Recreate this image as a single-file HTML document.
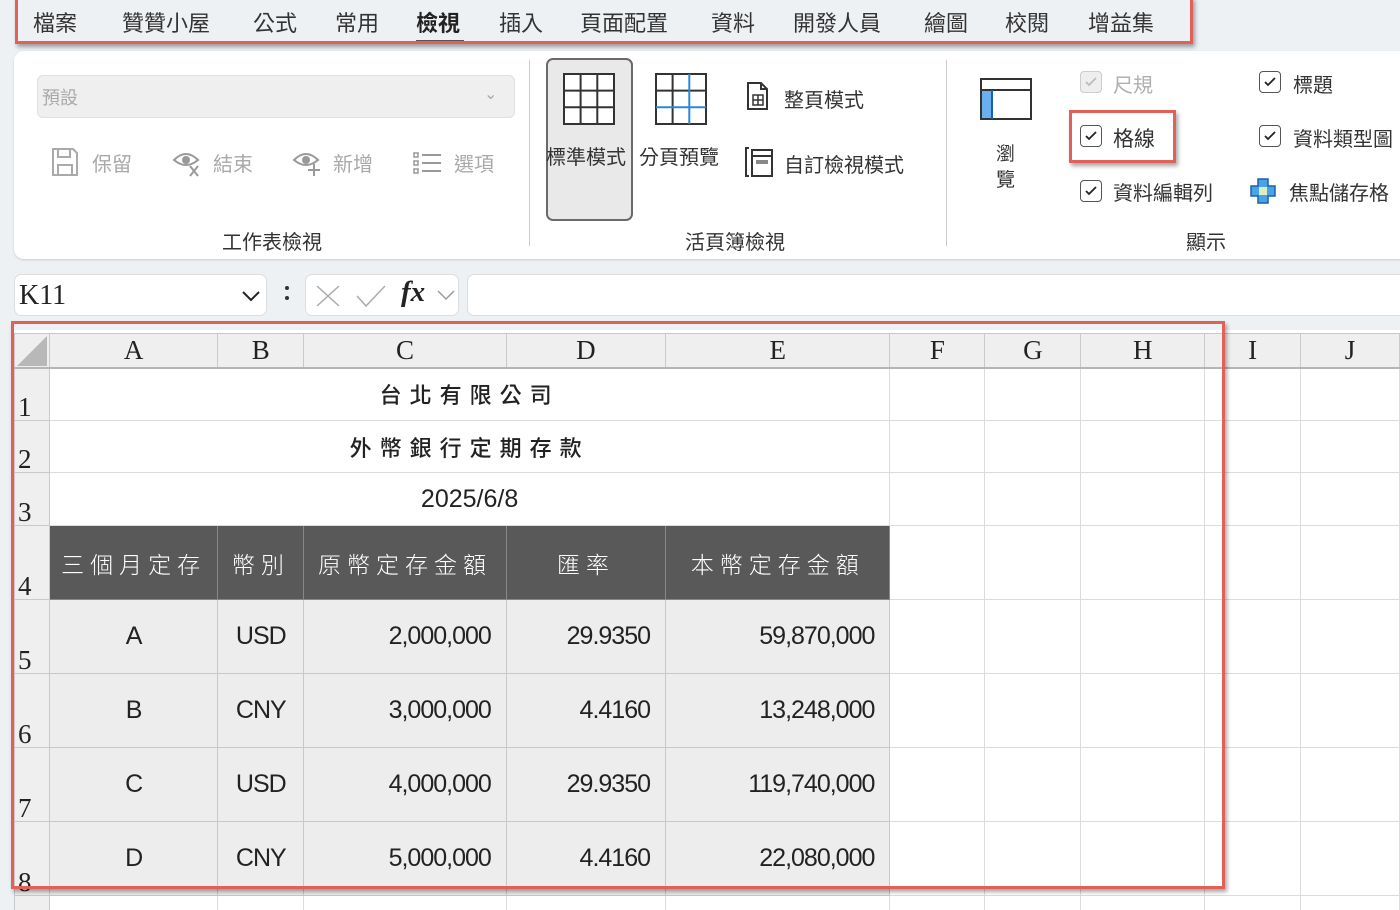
<!DOCTYPE html>
<html style="width:1400px;height:910px;overflow:hidden"><head><meta charset="utf-8">
<style>
*{margin:0;padding:0;box-sizing:border-box}
body{width:1400px;height:910px;overflow:hidden;background:#eef1f4;font-family:"Liberation Sans","Noto Sans CJK TC",sans-serif;position:relative;color:#222}
.a{position:absolute;white-space:nowrap}
.tab{position:absolute;top:6px;font-size:22px;color:#333}
.red{position:absolute;border:3px solid #e2605a;box-shadow:2px 3px 4px rgba(0,0,0,.35)}
.g{color:#a9a9a9}
.cb{position:absolute;width:22px;height:22px;border:1.5px solid #555;border-radius:4px;background:#fff}
.cb svg{position:absolute;left:3px;top:3px}
table{position:absolute;left:14px;top:333px;border-collapse:collapse;table-layout:fixed}
td{border:1px solid #dcdcdc;padding:0;overflow:hidden;white-space:nowrap}
tr.h td{background:#efefef;font-family:"Liberation Serif",serif;font-size:27px;text-align:center;color:#222;border-color:#c9c9c9;border-bottom:2px solid #b5b5b5}
td.rh{background:#efefef;font-family:"Liberation Serif",serif;font-size:27px;vertical-align:bottom;padding-left:3px;line-height:26px;border-color:#c9c9c9}
td.hd{background:#595959;color:#fff;font-size:23px;letter-spacing:6px;text-align:center;font-family:"Noto Sans CJK TC",sans-serif;font-weight:300;border-color:#888}
td.d{background:#ededed;font-family:"Liberation Sans Narrow","Liberation Sans",sans-serif;font-size:25px;letter-spacing:-1px;border-color:#c8c8c8;color:#222}
td.c{text-align:center}
td.r{text-align:right;padding-right:15px}
td.t{text-align:center;font-family:"Noto Sans CJK TC",sans-serif;font-size:22px;letter-spacing:8px;font-weight:500}
</style></head><body>

<div class="tab" style="left:33px">檔案</div>
<div class="tab" style="left:122px">贊贊小屋</div>
<div class="tab" style="left:253px">公式</div>
<div class="tab" style="left:335px">常用</div>
<div class="tab" style="left:416px;font-weight:bold;color:#222">檢視</div>
<div class="a" style="left:416px;top:40px;width:48px;height:3px;background:#555"></div>
<div class="tab" style="left:499px">插入</div>
<div class="tab" style="left:580px">頁面配置</div>
<div class="tab" style="left:711px">資料</div>
<div class="tab" style="left:793px">開發人員</div>
<div class="tab" style="left:924px">繪圖</div>
<div class="tab" style="left:1005px">校閱</div>
<div class="tab" style="left:1088px">增益集</div>
<div class="red" style="left:15px;top:-3px;width:1178px;height:47px"></div>

<div class="a" style="left:14px;top:51px;width:1400px;height:208px;background:#fff;border-radius:10px;box-shadow:0 1px 2px rgba(0,0,0,.15)"></div>
<div class="a" style="left:37px;top:75px;width:478px;height:43px;background:#efefef;border:1px solid #e0e0e0;border-radius:6px"></div>
<div class="a g" style="left:42px;top:84px;font-size:18px">預設</div>
<div class="a g" style="left:484px;top:84px;font-size:16px">⌄</div>
<svg class="a" style="left:51px;top:147px" width="28" height="30" viewBox="0 0 28 30"><path d="M2 2h20l4 4v22H2z M7 2v8h12V2 M7 28V18h14v10" fill="none" stroke="#aaa" stroke-width="2"/></svg>
<div class="a g" style="left:92px;top:148px;font-size:20px">保留</div>
<svg class="a" style="left:172px;top:150px" width="30" height="28" viewBox="0 0 30 28"><path d="M2 10q12-12 24 0q-12 10-24 0z" fill="none" stroke="#999" stroke-width="2"/><circle cx="14" cy="10" r="4" fill="#999"/><path d="M18 16l8 10M26 16l-8 10" stroke="#999" stroke-width="2"/></svg>
<div class="a g" style="left:213px;top:148px;font-size:20px">結束</div>
<svg class="a" style="left:292px;top:150px" width="30" height="28" viewBox="0 0 30 28"><path d="M2 10q12-12 24 0q-12 10-24 0z" fill="none" stroke="#999" stroke-width="2"/><circle cx="14" cy="10" r="4" fill="#999"/><path d="M22 14v12M16 20h12" stroke="#999" stroke-width="2"/></svg>
<div class="a g" style="left:333px;top:148px;font-size:20px">新增</div>
<svg class="a" style="left:413px;top:151px" width="30" height="24" viewBox="0 0 30 24"><path d="M1 2h4v4H1zM1 10h4v4H1zM1 18h4v4H1z" fill="none" stroke="#999" stroke-width="1.5"/><path d="M9 4h19M9 12h19M9 20h19" stroke="#999" stroke-width="2"/></svg>
<div class="a g" style="left:454px;top:148px;font-size:20px">選項</div>
<div class="a" style="left:222px;top:226px;font-size:20px;color:#333">工作表檢視</div>
<div class="a" style="left:529px;top:60px;width:1px;height:186px;background:#ccc"></div>

<div class="a" style="left:546px;top:58px;width:87px;height:163px;background:#e9e9e9;border:2px solid #6a6a6a;border-radius:7px"></div>
<svg class="a" style="left:563px;top:73px" width="52" height="52" viewBox="0 0 52 52"><path d="M1 1h50v50H1zM1 17.6h50M1 34.3h50M17.6 1v50M34.3 1v50" fill="#fff" stroke="#333" stroke-width="2"/></svg>
<div class="a" style="left:546px;top:141px;font-size:20px;color:#333">標準模式</div>
<svg class="a" style="left:655px;top:73px" width="52" height="52" viewBox="0 0 52 52"><path d="M1 1h50v50H1zM1 17.6h50M17.6 1v50" fill="#fff" stroke="#333" stroke-width="2"/><path d="M1 34.3h50M34.3 1v50" stroke="#2b88d8" stroke-width="2"/></svg>
<div class="a" style="left:639px;top:141px;font-size:20px;color:#333">分頁預覽</div>
<svg class="a" style="left:747px;top:82px" width="22" height="28" viewBox="0 0 22 28"><path d="M1 1h13l6 6v20H1z M14 1v6h6" fill="none" stroke="#333" stroke-width="2"/><path d="M6 13h10v10H6zM11 13v10M6 18h10" fill="none" stroke="#333" stroke-width="1.5"/></svg>
<div class="a" style="left:784px;top:84px;font-size:20px;color:#333">整頁模式</div>
<svg class="a" style="left:744px;top:146px" width="30" height="32" viewBox="0 0 30 32"><path d="M2 2v28M1 2h4M1 30h4" stroke="#333" stroke-width="2"/><path d="M8 4h20v26H8zM8 10h20" fill="none" stroke="#333" stroke-width="2"/><path d="M12 14h12v4H12z" fill="#888"/></svg>
<div class="a" style="left:784px;top:149px;font-size:20px;color:#333">自訂檢視模式</div>
<div class="a" style="left:685px;top:226px;font-size:20px;color:#333">活頁簿檢視</div>
<div class="a" style="left:946px;top:60px;width:1px;height:186px;background:#ccc"></div>

<svg class="a" style="left:980px;top:78px" width="52" height="42" viewBox="0 0 52 42"><path d="M1 1h50v40H1z" fill="#fff" stroke="#333" stroke-width="2"/><path d="M1 12h50" stroke="#333" stroke-width="2"/><path d="M2 13h10v27H2z" fill="#6ab0f0"/><path d="M12 12v29" stroke="#1f5fa8" stroke-width="2"/></svg>
<div class="a" style="left:996px;top:142px;font-size:19px;color:#333;line-height:26px;white-space:normal;width:22px">瀏覽</div>

<div class="cb" style="left:1080px;top:71px;border-color:#ccc;background:#eee"><svg width="14" height="14"><path d="M2 7l3 3 7-7" fill="none" stroke="#bbb" stroke-width="1.8"/></svg></div>
<div class="a" style="left:1113px;top:69px;font-size:20px;color:#b0b0b0">尺規</div>
<div class="cb" style="left:1080px;top:125px"><svg width="14" height="14"><path d="M2 7l3 3 7-7" fill="none" stroke="#222" stroke-width="1.8"/></svg></div>
<div class="a" style="left:1113px;top:123px;font-size:21px;color:#333">格線</div>
<div class="red" style="left:1069px;top:110px;width:107px;height:53px"></div>
<div class="cb" style="left:1080px;top:180px"><svg width="14" height="14"><path d="M2 7l3 3 7-7" fill="none" stroke="#222" stroke-width="1.8"/></svg></div>
<div class="a" style="left:1113px;top:177px;font-size:20px;color:#333">資料編輯列</div>
<div class="cb" style="left:1259px;top:71px"><svg width="14" height="14"><path d="M2 7l3 3 7-7" fill="none" stroke="#222" stroke-width="1.8"/></svg></div>
<div class="a" style="left:1293px;top:69px;font-size:20px;color:#333">標題</div>
<div class="cb" style="left:1259px;top:125px"><svg width="14" height="14"><path d="M2 7l3 3 7-7" fill="none" stroke="#222" stroke-width="1.8"/></svg></div>
<div class="a" style="left:1293px;top:123px;font-size:20px;color:#333">資料類型圖</div>
<svg class="a" style="left:1250px;top:178px" width="26" height="26" viewBox="0 0 26 26"><path d="M8 1h10v7h7v10h-7v7H8v-7H1V8h7z" fill="#4aa3ea" stroke="#1d5fa8" stroke-width="1.5"/><path d="M9 9h8v8H9z" fill="#d8f0c0"/></svg>
<div class="a" style="left:1289px;top:177px;font-size:20px;color:#333">焦點儲存格</div>
<div class="a" style="left:1186px;top:226px;font-size:20px;color:#333">顯示</div>

<div class="a" style="left:14px;top:274px;width:253px;height:42px;background:#fff;border:1px solid #ddd;border-radius:7px"></div>
<div class="a" style="left:19px;top:280px;font-family:'Liberation Serif',serif;font-size:28px;color:#222">K11</div>
<svg class="a" style="left:241px;top:290px" width="20" height="12"><path d="M2 2l8 8 8-8" fill="none" stroke="#222" stroke-width="2"/></svg>
<div class="a" style="left:285px;top:286px;width:4px;height:4px;background:#333;border-radius:2px"></div>
<div class="a" style="left:285px;top:296px;width:4px;height:4px;background:#333;border-radius:2px"></div>
<div class="a" style="left:305px;top:274px;width:154px;height:42px;background:#fff;border:1px solid #ddd;border-radius:7px"></div>
<svg class="a" style="left:315px;top:284px" width="26" height="24"><path d="M2 2l22 20M24 2L2 22" stroke="#aaa" stroke-width="1.5"/></svg>
<svg class="a" style="left:355px;top:284px" width="32" height="24"><path d="M2 12l9 10L30 2" fill="none" stroke="#aaa" stroke-width="1.5"/></svg>
<div class="a" style="left:401px;top:276px;font-family:'Liberation Serif',serif;font-style:italic;font-weight:bold;font-size:29px;color:#222">fx</div>
<svg class="a" style="left:436px;top:289px" width="20" height="12"><path d="M2 2l8 8 8-8" fill="none" stroke="#999" stroke-width="1.5"/></svg>
<div class="a" style="left:467px;top:274px;width:940px;height:42px;background:#fff;border:1px solid #ddd;border-radius:7px"></div>

<div class="a" style="left:14px;top:330px;width:1386px;height:580px;background:#fff"></div>
<table>
<colgroup><col style="width:35px"><col style="width:169px"><col style="width:86px"><col style="width:203px"><col style="width:160px"><col style="width:225px"><col style="width:96px"><col style="width:97px"><col style="width:125px"><col style="width:97px"><col style="width:100px"></colgroup>
<tr class="h" style="height:34px"><td style="position:relative"><svg style="position:absolute;left:2px;top:2px" width="30" height="30"><path d="M30 0V30H0z" fill="#b8b8b8"/></svg></td><td>A</td><td>B</td><td>C</td><td>D</td><td>E</td><td>F</td><td>G</td><td>H</td><td>I</td><td>J</td></tr>
<tr style="height:53px"><td class="rh">1</td><td colspan="5" class="t">台北有限公司</td><td></td><td></td><td></td><td></td><td></td></tr>
<tr style="height:52px"><td class="rh">2</td><td colspan="5" class="t">外幣銀行定期存款</td><td></td><td></td><td></td><td></td><td></td></tr>
<tr style="height:53px"><td class="rh">3</td><td colspan="5" class="t" style="font-family:'Liberation Sans',sans-serif;letter-spacing:0;font-size:25px;font-weight:normal">2025/6/8</td><td></td><td></td><td></td><td></td><td></td></tr>
<tr style="height:74px"><td class="rh">4</td><td class="hd">三個月定存</td><td class="hd">幣別</td><td class="hd">原幣定存金額</td><td class="hd">匯率</td><td class="hd">本幣定存金額</td><td></td><td></td><td></td><td></td><td></td></tr>
<tr style="height:74px"><td class="rh">5</td><td class="d c">A</td><td class="d c">USD</td><td class="d r">2,000,000</td><td class="d r">29.9350</td><td class="d r">59,870,000</td><td></td><td></td><td></td><td></td><td></td></tr>
<tr style="height:74px"><td class="rh">6</td><td class="d c">B</td><td class="d c">CNY</td><td class="d r">3,000,000</td><td class="d r">4.4160</td><td class="d r">13,248,000</td><td></td><td></td><td></td><td></td><td></td></tr>
<tr style="height:74px"><td class="rh">7</td><td class="d c">C</td><td class="d c">USD</td><td class="d r">4,000,000</td><td class="d r">29.9350</td><td class="d r">119,740,000</td><td></td><td></td><td></td><td></td><td></td></tr>
<tr style="height:74px"><td class="rh">8</td><td class="d c">D</td><td class="d c">CNY</td><td class="d r">5,000,000</td><td class="d r">4.4160</td><td class="d r">22,080,000</td><td></td><td></td><td></td><td></td><td></td></tr>
<tr style="height:30px"><td class="rh"></td><td></td><td></td><td></td><td></td><td></td><td></td><td></td><td></td><td></td><td></td></tr>
</table>
<div class="red" style="left:11px;top:321px;width:1214px;height:568px"></div>
</body></html>
